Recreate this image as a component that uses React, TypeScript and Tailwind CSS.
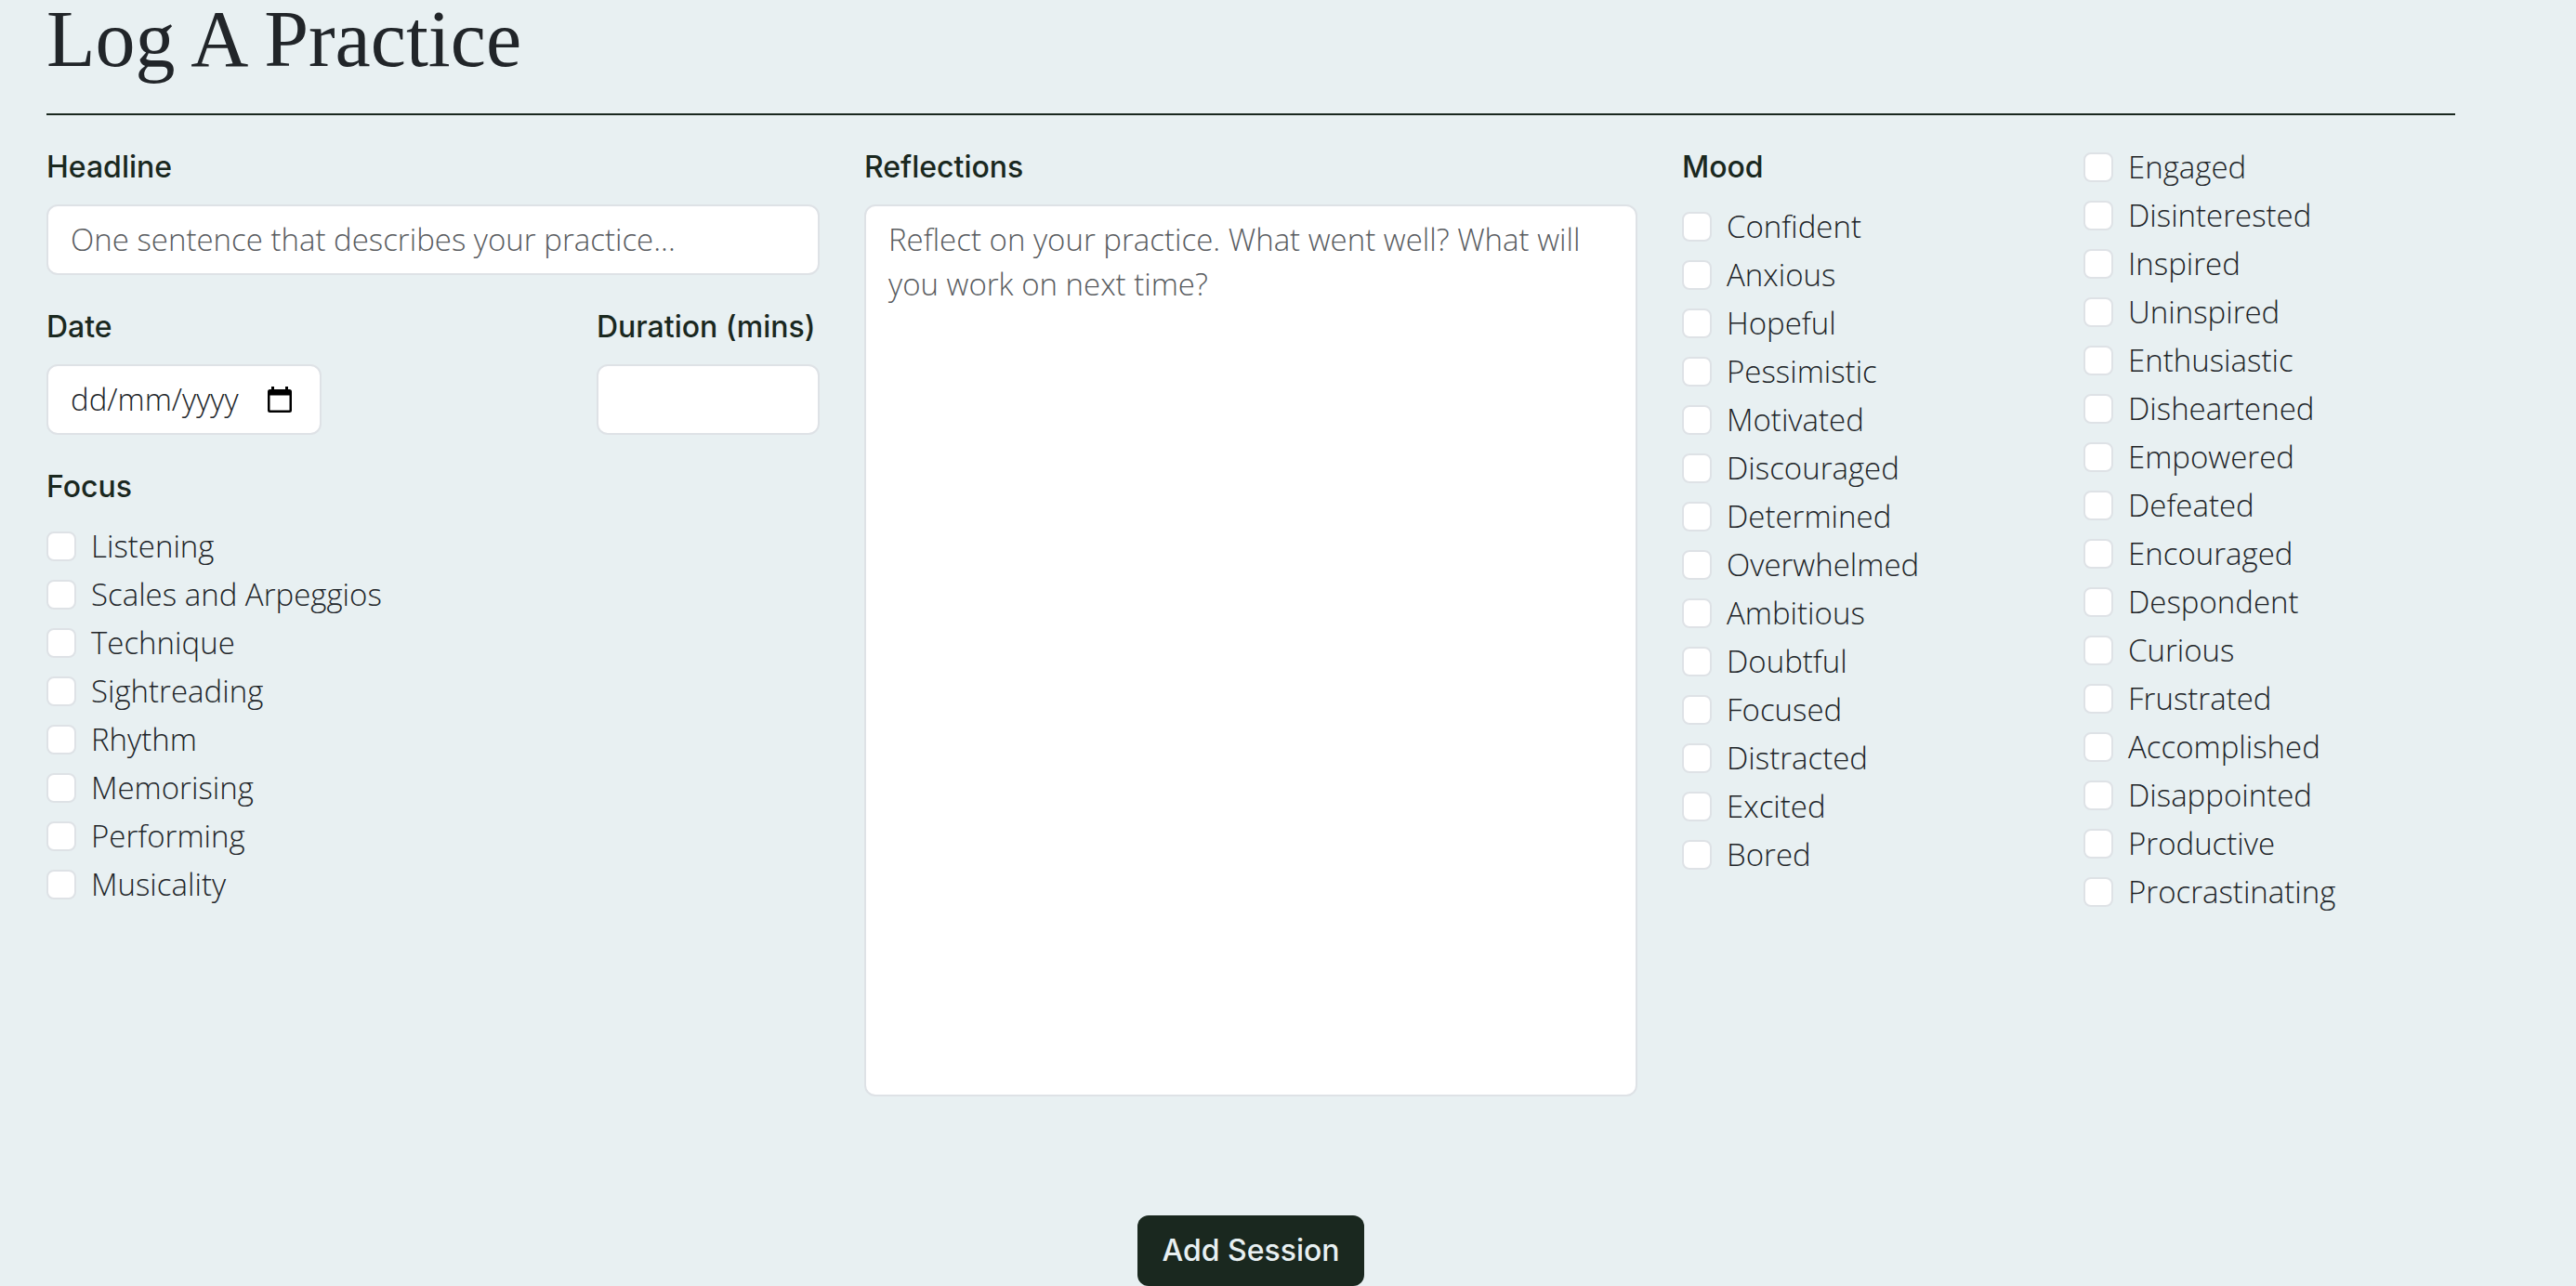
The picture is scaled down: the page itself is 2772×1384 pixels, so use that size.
import type { ReactNode } from "react";

const FOCUS = [
  "Listening",
  "Scales and Arpeggios",
  "Technique",
  "Sightreading",
  "Rhythm",
  "Memorising",
  "Performing",
  "Musicality",
];

const MOODS_LEFT = [
  "Confident",
  "Anxious",
  "Hopeful",
  "Pessimistic",
  "Motivated",
  "Discouraged",
  "Determined",
  "Overwhelmed",
  "Ambitious",
  "Doubtful",
  "Focused",
  "Distracted",
  "Excited",
  "Bored",
];

const MOODS_RIGHT = [
  "Engaged",
  "Disinterested",
  "Inspired",
  "Uninspired",
  "Enthusiastic",
  "Disheartened",
  "Empowered",
  "Defeated",
  "Encouraged",
  "Despondent",
  "Curious",
  "Frustrated",
  "Accomplished",
  "Disappointed",
  "Productive",
  "Procrastinating",
];

const labelClass =
  "mb-4 block font-['Inter',sans-serif] text-[32px] leading-[48px] font-medium whitespace-nowrap text-[#1a281f]";

const fieldClass =
  "block w-full rounded-xl border-2 border-[#dee2e6] bg-white px-6 py-3 text-[33px] leading-[48px] text-[#212529] placeholder:text-[#595c5f] placeholder:opacity-100";

function Field({ id, label, children }: { id: string; label: string; children: ReactNode }) {
  return (
    <div>
      <label htmlFor={id} className={labelClass}>
        {label}
      </label>
      {children}
    </div>
  );
}

function CheckList({ name, items }: { name: string; items: string[] }) {
  return (
    <div className="flex flex-col gap-1">
      {items.map((item) => (
        <label key={item} className="flex items-start gap-4 text-[33px] leading-[48px] whitespace-nowrap">
          <input
            type="checkbox"
            name={name}
            value={item}
            className="mt-2 size-8 shrink-0 appearance-none rounded-lg border-2 border-[#dee2e6] bg-white checked:bg-[#1a281f]"
          />
          {item}
        </label>
      ))}
    </div>
  );
}

function CalendarIcon() {
  return (
    <svg viewBox="0 0 26 28" className="h-7 w-[26px]" aria-hidden="true">
      <path
        fill="#000"
        fillRule="evenodd"
        d="M4 0h3v3h12V0h3v3h1.500A2.500 2.500 0 0 1 26 5.500V25.500A2.500 2.500 0 0 1 23.500 28H2.500A2.500 2.500 0 0 1 0 25.500V5.500A2.500 2.500 0 0 1 2.500 3H4zM2.500 9.500v16h21v-16z"
      />
    </svg>
  );
}

export default function App() {
  return (
    <main className="min-h-screen bg-[#e8f0f2] pr-[130px] pl-[50px] font-['Open_Sans',sans-serif] font-light text-[#212529]">
      <h1 className="border-b-2 border-[#1a281f] pb-[38px] font-['Liberation_Serif',serif] text-[86px] leading-[84px] font-normal">
        Log A Practice
      </h1>

      <form className="pt-8" onSubmit={(e) => e.preventDefault()}>
        <div className="grid grid-cols-3 gap-12">
          <div className="flex flex-col gap-8">
            <Field id="headline" label="Headline">
              <input
                id="headline"
                type="text"
                placeholder="One sentence that describes your practice..."
                className={fieldClass}
              />
            </Field>

            <div className="flex justify-between">
              <Field id="date" label="Date">
                <div className="flex w-[296px] items-center rounded-xl border-2 border-[#dee2e6] bg-white py-3 pr-[30px] pl-6">
                  <input
                    id="date"
                    type="text"
                    placeholder="dd/mm/yyyy"
                    className="min-w-0 flex-1 bg-transparent text-[33px] leading-[48px] placeholder:text-[#212529] placeholder:opacity-100"
                  />
                  <button type="button" aria-label="Open calendar" className="shrink-0">
                    <CalendarIcon />
                  </button>
                </div>
              </Field>
              <div className="w-[240px]">
                <Field id="duration" label="Duration (mins)">
                  <input id="duration" type="text" inputMode="numeric" className={fieldClass} />
                </Field>
              </div>
            </div>

            <fieldset>
              <legend className={labelClass}>Focus</legend>
              <CheckList name="focus" items={FOCUS} />
            </fieldset>
          </div>

          <Field id="reflections" label="Reflections">
            <textarea
              id="reflections"
              placeholder="Reflect on your practice. What went well? What will you work on next time?"
              className={`${fieldClass} h-[960px] resize-none`}
            />
          </Field>

          <div role="group" aria-labelledby="mood" className="grid grid-cols-2 gap-8">
            <div>
              <h2 id="mood" className={labelClass}>
                Mood
              </h2>
              <CheckList name="mood" items={MOODS_LEFT} />
            </div>
            <CheckList name="mood" items={MOODS_RIGHT} />
          </div>
        </div>

        <div className="mt-32 flex justify-center">
          <button
            type="submit"
            className="rounded-xl bg-[#1a281f] px-[26px] py-[14px] font-['Inter',sans-serif] text-[32px] leading-[48px] font-medium text-[#e8f0f2]"
          >
            Add Session
          </button>
        </div>
      </form>
    </main>
  );
}
